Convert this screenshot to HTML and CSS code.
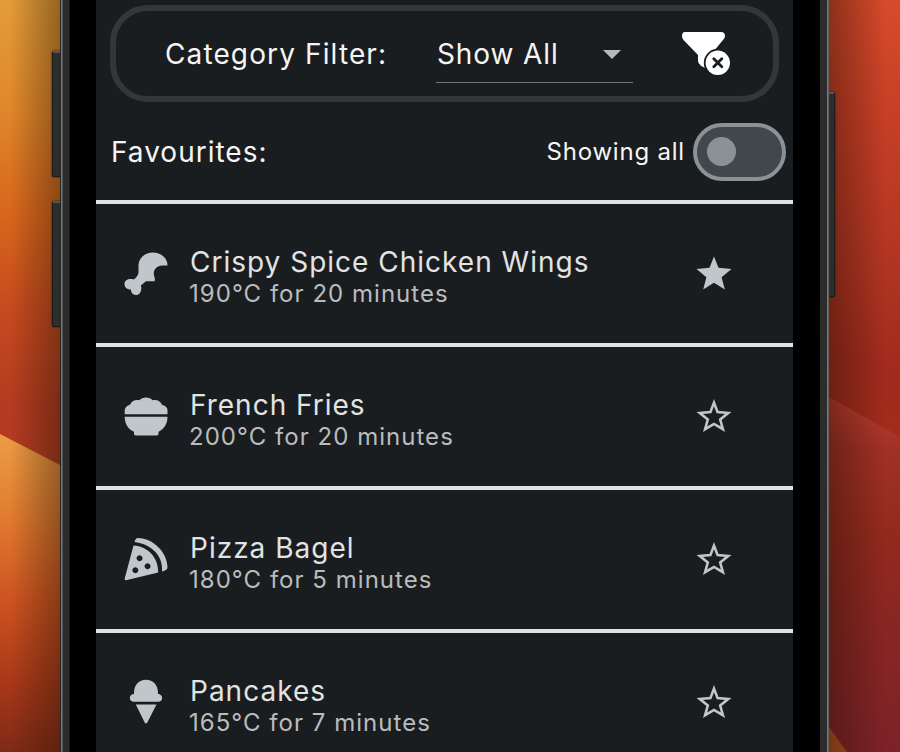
FILE: index.html
```html
<!DOCTYPE html>
<html lang="en">
<head>
<meta charset="utf-8">
<title>Air fryer recipes</title>
<link rel="stylesheet" href="styles.css">
</head>
<body>
<div class="desktop">
  <div class="wall wall-left">
    <div class="wave wave-left"></div>
    <div class="shade shade-left"></div>
    <i class="key key-up"></i>
    <i class="key key-down"></i>
  </div>
  <div class="phone">
    <main class="screen">
      <section class="filter">
        <span class="filter-label">Category Filter:</span>
        <div class="select"><span>Show All</span><i class="caret"></i></div>
        <svg class="clear" viewBox="0 0 50 46" width="50" height="46">
          <path d="M5 2H41Q45 2 45 6Q45 8 43 10L29 27V39Q18 36 18 31V25L3.500 10Q2 8 2 6Q2 2 5 2Z" fill="#fff"/>
          <circle cx="37.800" cy="32.800" r="14" fill="#1a1d1f"/>
          <circle cx="37.800" cy="32.800" r="12.200" fill="#fff"/>
          <path d="M33.800 28.800l8 8M41.800 28.800L33.800 36.800" stroke="#1a1d1f" stroke-width="2.800" stroke-linecap="round"/>
        </svg>
      </section>
      <section class="favourites">
        <span class="fav-label">Favourites:</span>
        <span class="fav-state">Showing all</span>
        <div class="switch"><i class="knob"></i></div>
      </section>
      <ul class="list">
        <li class="row">
          <svg class="food" viewBox="0 0 50 50"><path d="M17.500 17C17.500 9 24 3.500 31.700 3.500C40 3.500 46.500 9 46.500 16.500H41.500C34 17 31 23 33.800 29V32.300H25L19.800 36.500C21.500 41 19 46 15 46C11.500 46 10 43 9.900 40.500C5.500 40.500 3.500 38 3.500 35C3.500 30.500 8 29.300 12.800 30.400Q17.500 27 17.500 23Z"/></svg>
          <div class="text"><h2>Crispy Spice Chicken Wings</h2><p>190°C for 20 minutes</p></div>
          <svg class="star" viewBox="0 0 40 40"><path class="solid" d="M20 2.500l4.500 11.300 13 1.200-9.900 8.200 3.200 12.300L20 28.800 9.200 35.500l3.200-12.300L2.500 15l13-1.200Z"/></svg>
        </li>
        <li class="row">
          <svg class="food" viewBox="0 1.200 50 50"><path d="M3.700 23.500V19.500C4 16.500 6 15 9 14C10.500 10 14.500 8.500 18.500 9.500C21 5.800 29 5.800 31.500 9.500C35.500 8.500 39.500 10 41 14C44 15 46.500 16.500 46.500 19.500V23.500Z"/><path d="M3.700 26H46.500C46.500 33.500 42.500 38.500 37.500 41V43Q37.500 44.800 36 44.800H14.500Q13 44.800 13 43V41C7.500 38.500 3.700 33.500 3.700 26Z"/></svg>
          <div class="text"><h2>French Fries</h2><p>200°C for 20 minutes</p></div>
          <svg class="star" viewBox="0 0 40 40"><path class="outline" d="M20 5.600l3.600 9.500 10.600.9-8 6.500 2.700 9.700L20 26.900l-8.900 5.300 2.700-9.700-8-6.500 10.600-.9Z"/></svg>
        </li>
        <li class="row">
          <svg class="food" viewBox="0 .5 50 50"><path d="M13.500 7.500Q14.500 3.500 17 3.500C32 3.500 46.500 18 46.500 33Q46.500 35.700 41 37C42.500 21 30 9.500 13.500 7.500Z"/><path fill-rule="evenodd" d="M12.500 11C27 12 37.500 23 37.200 38L5 45.700Q3.200 45.700 3.700 44ZM18.500 20.700a3 3 0 1 0 .1 0ZM26.500 28.700a3 3 0 1 0 .1 0ZM14.300 32.700a3 3 0 1 0 .1 0Z"/></svg>
          <div class="text"><h2>Pizza Bagel</h2><p>180°C for 5 minutes</p></div>
          <svg class="star" viewBox="0 0 40 40"><path class="outline" d="M20 5.600l3.600 9.500 10.600.9-8 6.500 2.700 9.700L20 26.900l-8.900 5.300 2.700-9.700-8-6.500 10.600-.9Z"/></svg>
        </li>
        <li class="row">
          <svg class="food" viewBox="0 1 50 50"><path d="M13 16C13 8 18 2.800 25 2.800S37 8 37 16V17C39.500 17 41.200 18.700 41.200 21S39.500 24.800 37.200 24.800H12.800C10.500 24.800 8.800 23.300 8.800 21S10.500 17 13 17Z"/><path d="M14.800 27.500H35.500L26.300 45.500Q25 47.300 23.700 45.500Z"/></svg>
          <div class="text"><h2>Pancakes</h2><p>165°C for 7 minutes</p></div>
          <svg class="star" viewBox="0 0 40 40"><path class="outline" d="M20 5.600l3.600 9.500 10.600.9-8 6.500 2.700 9.700L20 26.900l-8.900 5.300 2.700-9.700-8-6.500 10.600-.9Z"/></svg>
        </li>
      </ul>
    </main>
  </div>
  <div class="wall wall-right">
    <div class="wave wave-right"></div>
    <div class="wave wave-corner"></div>
    <div class="shade shade-right"></div>
    <i class="key key-power"></i>
  </div>
</div>
</body>
</html>
```
FILE: styles.css
```css
* { box-sizing: border-box; }
body { margin: 0; font-family: Inter, "Liberation Sans", sans-serif; overflow: hidden; }
.desktop { display: grid; grid-template-columns: 60px 769px 71px; width: 900px; height: 752px; }

/* Wallpaper */
.wall { position: relative; overflow: hidden; }
.wall-left { background: linear-gradient(188deg, #e39e38 0, #e0882b 110px, #d8661c 220px, #c74b1f 310px, #b63c20 400px, #b23a20 470px); }
.wall-right { background: linear-gradient(190deg, #d64b2a 0, #c83f26 110px, #b13522 260px, #a02a1d 370px, #a02d1a 440px); }
.wave, .shade { position: absolute; inset: 0; }
.wave-left { background: linear-gradient(188deg, #eda046 430px, #e17b2f 520px, #cf5420 600px, #aa3919 680px, #7a2817 760px); clip-path: polygon(0 434px, 60px 465px, 60px 752px, 0 752px); }
.wave-right { background: linear-gradient(185deg, #bd3b2d 405px, #a03026 450px, #92291d 540px, #872523 640px, #7d2228 752px); clip-path: polygon(0 397px, 71px 437px, 71px 752px, 0 752px); }
.wave-corner { background: #ae541c; clip-path: polygon(0 727px, 18px 752px, 0 752px); }
.shade-left { background: linear-gradient(90deg, transparent 10px, rgba(40, 20, 5, .42)); }
.shade-right { background: linear-gradient(270deg, transparent 15px, rgba(40, 15, 5, .42)); }

/* Hardware keys */
.key { position: absolute; background: #2c2d2d; border: 1px solid #1b1b1b; box-shadow: 0 0 2px #1a100a; }
.key-up, .key-down { left: 52px; width: 10px; border-top: 2px solid #555; border-radius: 2px 0 0 2px; }
.key-up { top: 51px; height: 126px; }
.key-down { top: 201px; height: 126px; }
.key-power { left: -1px; top: 92px; width: 7px; height: 205px; border-top: 2px solid #555; border-radius: 0 2px 2px 0; }

.phone {
  display: flex; justify-content: center; padding: 0 36px; height: 752px;
  background: linear-gradient(90deg, #252525 0 1px, #797979 1px 2px, #535353 2px 3px, #2c2c2c 3px 9px, #1b1b1b 9px 10px, #000 10px 760px, #2c2c2c 760px 767px, #797979 767px 768px, #60605f 768px);
}
.screen { width: 697px; height: 752px; background: #1a1d1f; color: #f5f5f5; overflow: hidden; }

.filter {
  display: flex; align-items: center; height: 97px; margin: 5px 14px 0; padding-left: 49px;
  border: 6px solid #343737; border-radius: 38px;
}
.filter-label { width: 271px; font-size: 28px; letter-spacing: 1.12px; white-space: nowrap; }
.select {
  display: flex; justify-content: space-between; align-items: center; width: 197px; height: 58px;
  padding: 2px 12px 0 1px; border-bottom: 1px solid #747677; font-size: 28px; letter-spacing: .9px;
}
.caret { border: 9px solid transparent; border-top-color: #b8b9ba; border-bottom: 0; }
.clear { margin: -1px 0 0 47px; }

.favourites { display: flex; align-items: center; height: 98px; padding: 2px 7px 0 15px; }
.fav-label { flex: 1; font-size: 28px; letter-spacing: 1px; }
.fav-state { margin: -2px 8px 0 0; font-size: 24px; letter-spacing: .8px; }
.switch { width: 93px; height: 58px; padding: 10px; border: 4px solid #8b9295; border-radius: 29px; background: #40484c; }
.knob { display: block; width: 29px; height: 29px; border-radius: 50%; background: #8b9295; }

.list { margin: 0; padding: 0; list-style: none; }
.row { display: flex; align-items: center; height: 143px; padding: 0 59px 0 25px; border-top: 4px solid #e0e2e3; }
.food { width: 50px; height: 50px; margin-right: 19px; fill: #c0c7ca; }
.text { flex: 1; padding-top: 9px; }
h2, p { margin: 0; font-weight: 400; line-height: 32px; white-space: nowrap; }
h2 { font-size: 28px; letter-spacing: 1px; color: #e1e3e4; }
p { margin-left: -1px; font-size: 24px; letter-spacing: 1.03px; color: #b9bcbe; }
.star { width: 40px; height: 40px; }
.solid { fill: #c0c7ca; }
.outline { fill: none; stroke: #c0c7ca; stroke-width: 2.600px; }
```
